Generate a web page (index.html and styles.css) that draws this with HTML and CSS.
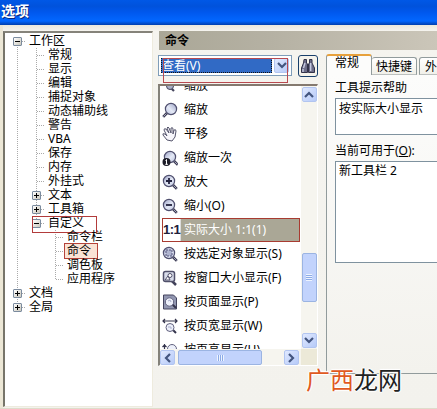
FILE: index.html
```
<!DOCTYPE html>
<html lang="zh-CN">
<head>
<meta charset="utf-8">
<title>选项</title>
<link rel="stylesheet" href="styles.css">
</head>
<body>
<svg width="0" height="0" class="defs">
  <defs>
    <linearGradient id="glass" x1="0" y1="0" x2="1" y2="1"><stop offset="0" stop-color="#9aa0c4"/><stop offset=".55" stop-color="#e4e9f6"/><stop offset="1" stop-color="#b9c0dc"/></linearGradient>
    <g id="lens"><path d="M11 11l3.800 3.800" stroke="#3c3c55" stroke-width="2.600"/><path d="M11.500 11.500l3 3" stroke="#a6a6bb" stroke-width="1"/><circle cx="7" cy="7" r="5.600" fill="url(#glass)" stroke="#50506f" stroke-width="1.200"/></g>
  </defs>
</svg>
<header class="titlebar">选项</header>
<main class="dialog">
  <nav class="tree">
    <ul class="roots">
      <li><div class="node"><i class="box minus"></i>工作区</div>
        <ul class="branch">
          <li class="node">常规</li><li class="node">显示</li><li class="node">编辑</li><li class="node">捕捉对象</li><li class="node">动态辅助线</li><li class="node">警告</li><li class="node">VBA</li><li class="node">保存</li><li class="node">内存</li><li class="node">外挂式</li>
          <li class="node"><i class="box"></i>文本</li>
          <li class="node"><i class="box"></i>工具箱</li>
          <li><div class="node marked"><i class="box minus"></i>自定义</div>
            <ul class="branch deep">
              <li class="node">命令栏</li><li class="node"><span class="chosen">命令</span></li><li class="node">调色板</li><li class="node">应用程序</li>
            </ul>
          </li>
        </ul>
      </li>
      <li class="node"><i class="box"></i>文档</li>
      <li class="node"><i class="box"></i>全局</li>
    </ul>
  </nav>
  <section class="content">
    <h1>命令</h1>
    <div class="columns">
      <div class="commands">
        <div class="picker">
          <div class="combo"><span class="value">查看(V)</span><span class="btn"><svg width="10" height="7" viewBox="0 0 10 7"><path d="M1 1l4 4 4-4"/></svg></span></div>
          <button class="find"><svg width="16" height="17" viewBox="0 0 16 17"><path d="M4 1.500h2.500V5l1 1v8.500h-6V10l2-5zM9.500 1.500H12V5l2.500 5v4.500h-6V6l1-1z" fill="#6d6d88" stroke="#33334a"/><path d="M7 6h2v4H7z" fill="#34344a"/><path d="M3.500 10L5 5M10.700 5v8M3 14v-3" stroke="#c7cae0" stroke-width="1.400"/></svg></button>
          <i class="outline"></i>
        </div>
        <div class="listbox">
          <ul class="items">
            <li><svg viewBox="0 0 16 16"><path d="M1 5.500h14" stroke="#46465e" stroke-width="2"/><path d="M9 10l3 3" stroke="#46465e" stroke-width="2.200"/><circle cx="8" cy="8" r="3.500" fill="#aaaec5" stroke="#46465e"/></svg>缩放</li>
            <li><svg viewBox="0 0 16 16"><g transform="matrix(-1 0 0 1 16 0)"><use href="#lens"/></g></svg>缩放</li>
            <li><svg viewBox="0 0 16 16"><path d="M5 14L1 9q-1-2 2-1l2 2-3-6q0-2 2-1l3 4-2-5q1-2 2 0l2 5V2q2-1 2 1v5l1-4q2-1 2 1l-1 6-3 4z" fill="#f7f6fb" stroke="#56566d"/></svg>平移</li>
            <li><svg viewBox="0 0 16 16"><g transform="translate(1 0)"><use href="#lens"/></g><circle cx="4.500" cy="12" r="4" fill="#1b1b27"/><path d="M3.500 10.500l1-1v5M3.300 14.300h2.600" stroke="#fff"/></svg>缩放一次</li>
            <li><svg viewBox="0 0 16 16"><use href="#lens"/><path d="M4 7h6M7 4v6" stroke="#22223e" stroke-width="1.800"/></svg>放大</li>
            <li><svg viewBox="0 0 16 16"><use href="#lens"/><path d="M4 7h6" stroke="#22223e" stroke-width="1.800"/></svg>缩小(O)</li>
            <li class="selected"><b>1:1</b><span>实际大小 1:1(1)</span></li>
            <li><svg viewBox="0 0 16 16"><use href="#lens"/><rect x="4" y="4" width="6" height="6" stroke="#55557a" stroke-dasharray="2 1" fill="#b0b5d0"/></svg>按选定对象显示(S)</li>
            <li><svg viewBox="0 0 16 16"><path d="M10 11l4 4" stroke="#414159" stroke-width="2.500"/><rect x="1.500" y="1.500" width="11" height="10" rx="2" fill="#d8dcea" stroke="#50506a" stroke-width="1.500"/><circle cx="8" cy="5.500" r="2" fill="#fff" stroke="#50506a"/><path d="M3 10l3-4 2 4z" fill="#fff" stroke="#50506a"/></svg>按窗口大小显示(F)</li>
            <li><svg viewBox="0 0 16 16"><path d="M1.500 1h10l3 3v11h-13z" fill="#9297b1" stroke="#44445e"/><path d="M10 10l4 4" stroke="#34344c" stroke-width="2"/><circle cx="7.500" cy="8" r="4.200" fill="#edf0fa" stroke="#62627f"/><path d="M6 7l2-1 1 2" stroke="#a9aecb"/></svg>按页面显示(P)</li>
            <li><svg viewBox="0 0 16 16"><path d="M1 3h14M3 1L1 3l2 2M13 1l2 2-2 2" stroke="#34344c" stroke-width="1.200"/><path d="M11 12l3 3" stroke="#34344c" stroke-width="2"/><circle cx="8" cy="9.500" r="4" fill="#edf0fa" stroke="#62627f"/><path d="M6 9h3v2" stroke="#a9aecb"/></svg>按页宽显示(W)</li>
            <li><svg viewBox="0 0 16 16"><path d="M2.500 2v12M.5 5l2-2 2 2" stroke="#34344c" stroke-width="1.200"/><circle cx="10" cy="7" r="4.500" fill="#edf0fa" stroke="#62627f"/></svg>按页高显示(H)</li>
          </ul>
          <div class="vbar"><span class="btn"><svg width="10" height="7" viewBox="0 0 10 7"><path d="M1 6l4-4 4 4"/></svg></span><span class="thumb"><i></i></span><span class="btn"><svg width="10" height="7" viewBox="0 0 10 7"><path d="M1 1l4 4 4-4"/></svg></span></div>
          <div class="hbar"><span class="btn"><svg width="7" height="10" viewBox="0 0 7 10"><path d="M6 1L2 5l4 4"/></svg></span><span class="thumb"><i></i></span><span class="btn"><svg width="7" height="10" viewBox="0 0 7 10"><path d="M1 1l4 4-4 4"/></svg></span></div>
          <div class="corner"></div>
        </div>
      </div>
      <div class="details">
        <div class="tabs"><span class="tab active">常规</span><span class="tab">快捷键</span><span class="tab">外观</span></div>
        <div class="panel">
          <p>工具提示帮助</p>
          <div class="field help">按实际大小显示</div>
          <p>当前可用于(<u>O</u>):</p>
          <div class="field bars">新工具栏 2</div>
        </div>
      </div>
    </div>
  </section>
  <div class="watermark"><span>广西</span>龙网</div>
</main>
</body>
</html>
```
FILE: styles.css
```
* { box-sizing: border-box; }
body { margin: 0; width: 437px; height: 409px; overflow: hidden; background: #f3f2ed; color: #000; font: 12px/14px "Noto Sans", "Noto Sans CJK SC", sans-serif; }
ul, h1, p { margin: 0; padding: 0; list-style: none; }
svg { display: block; fill: none; flex: none; }
.defs { position: absolute; }
.titlebar { height: 25px; padding: 3px 0 0 1px; color: #fff; font-size: 14px; font-weight: bold; line-height: 15px; text-shadow: 1px 1px #0a2a80; background: linear-gradient(#0058e6 0, #0052dc 25%, #0058ee 50%, #0267ff 84%, #0350cf 93%, #003fae); }
.dialog { position: relative; display: flex; height: 384px; padding: 6px 0 1px 3px; border-bottom: 1px solid #dfdccb; background: linear-gradient(90deg, #ece7d6 3px, transparent 3px), linear-gradient(#ece9dc 0, #f5f4ef 6px, #f3f2ed 100%); }

.tree { width: 150px; height: 376px; padding-top: 1px; background: #fff; border: 1px solid #eeebde; border-left: 2px solid #77756a; border-top: 2px solid #85837a; flex: none; }
.roots { background: repeating-linear-gradient(#aaa 0 1px, transparent 1px 2px) 12px 7px / 1px 266px no-repeat; }
.node { position: relative; display: flex; align-items: flex-start; height: 14px; line-height: 13px; white-space: nowrap; }
.node::before { content: ""; align-self: center; width: 8px; height: 1px; margin: 0 3px 0 13px; background: repeating-linear-gradient(90deg, #aaa 0 1px, transparent 1px 2px); }
.branch { margin-left: 19px; background: repeating-linear-gradient(#aaa 0 1px, transparent 1px 2px) 12px 0 / 1px 175px no-repeat; }
.deep { background-size: 1px 49px; }
.box { position: absolute; left: 8px; top: 3px; width: 9px; height: 9px; border: 1px solid #7b8b9e; border-radius: 1px; background: linear-gradient(#000, #000) center / 5px 1px no-repeat, linear-gradient(#000, #000) center / 1px 5px no-repeat, linear-gradient(135deg, #fff, #cbc8bc); }
.box.minus { background: linear-gradient(#000, #000) center / 5px 1px no-repeat, linear-gradient(135deg, #fff, #cbc8bc); }
.marked::after { content: ""; position: absolute; left: 8px; top: 0; width: 63px; height: 15px; border: 1px solid #b23b3b; }
.chosen { height: 16px; margin: -1px 0 0 -3px; padding: 0 6px 0 2px; line-height: 13px; border: 1px solid #b4423a; background: #fae3d5; }

.content { flex: 1; min-width: 0; padding-left: 5px; }
h1 { height: 19px; margin-left: 1px; padding: 2px 0 0 6px; font-size: 12px; line-height: 15px; font-weight: bold; background: linear-gradient(90deg, #aaa797, #b5b1a3 40%, #cbc6b9); }
.columns { display: flex; padding-top: 4px; }
.commands { width: 160px; flex: none; }
.picker { position: relative; display: flex; gap: 6px; padding-top: 1px; height: 30px; }
.combo { display: flex; width: 134px; height: 21px; padding: 2px; border: 1px solid #7f9db9; background: #fff; }
.value { flex: 1; height: 15px; margin-right: 2px; color: #fff; line-height: 13px; border: 1px dotted #e0ae61; outline: 1px dotted #111; outline-offset: -1px; background: #316ac5; }
.btn { display: flex; align-items: center; justify-content: center; width: 15px; height: 15px; flex: none; border: 1px solid #b2c5f0; border-radius: 2px; background: linear-gradient(135deg, #e0e9ff, #b6caf8); }
.btn path { stroke: #43557f; stroke-width: 2.200; }
.find { display: grid; place-items: center; width: 20px; height: 22px; padding: 0; border: 1px solid #193f6b; border-radius: 3px; background: #f5f3ec; }
.outline { position: absolute; left: 5px; top: 4px; width: 125px; height: 25px; border: 1px solid #b84a50; }
.listbox { display: grid; grid-template: 263px 16px / 141px 16px; width: 160px; height: 282px; border: 1px solid #fff; border-top: 2px solid #84796f; border-left: 2px solid #84827a; background: #fff; }
.items { overflow: hidden; }
.items li { display: flex; align-items: center; height: 24px; padding-left: 2px; white-space: nowrap; }
.items li:first-child { margin-top: -12px; }
.items svg { width: 16px; height: 16px; margin-right: 6px; }
.items .selected { width: 138px; margin-left: 2px; padding: 0; color: #fff; border: 1px solid #a83b31; background: #aaa796; }
.selected b { width: 18px; height: 22px; color: #20203a; background: #fff; border-right: 1px solid #ddd; font: bold 13px/22px "Liberation Sans", sans-serif; letter-spacing: -.5px; text-align: center; }
.selected span { margin-left: 3px; }
.vbar, .hbar { display: flex; background: #f6f5ef; }
.vbar { flex-direction: column; align-items: center; padding-top: 1px; }
.hbar { align-items: flex-end; }
.corner { background: #ece9d8; }
.thumb { display: grid; place-items: center; border: 1px solid #9bb4e2; border-radius: 2px; background: #c2d3fc; }
.vbar .thumb { width: 15px; height: 49px; margin: 151px 0 31px; }
.hbar .thumb { width: 84px; height: 15px; margin: 0 22px 0 3px; }
.vbar .thumb i { width: 6px; height: 7px; background: repeating-linear-gradient(#eef4ff 0 1px, #8cabe6 1px 2px); }
.hbar .thumb i { width: 7px; height: 6px; background: repeating-linear-gradient(90deg, #eef4ff 0 1px, #8cabe6 1px 2px); }

.details { width: 111px; margin-left: 8px; flex: none; overflow: hidden; }
.tabs { display: flex; align-items: flex-end; height: 21px; }
.tab { flex: none; width: 45px; height: 18px; margin-right: 2px; padding: 1px 0 0 5px; line-height: 15px; white-space: nowrap; border: 1px solid #919b9c; border-bottom-color: #bcc0bf; border-radius: 3px 3px 0 0; background: linear-gradient(#fff, #f1f0e9); }
.tab.active { width: 46px; height: 21px; margin: 0; padding: 0 0 0 8px; line-height: 14px; border-top: 2px solid #e7a13c; border-bottom: 0; background: #fcfcfb; }
.tab:nth-child(2) { padding-left: 4px; border-left: 0; }
.panel { width: 140px; height: 299px; padding: 4px 0 0 8px; border: 1px solid #919b9c; border-top: 0; background: linear-gradient(#fcfcfb, #f3f2ed); }
.panel p { height: 19px; line-height: 17px; white-space: nowrap; }
.field { width: 140px; border: 1px solid #7f929f; background: #fff; padding: 2px 0 0 3px; line-height: 15px; }
.help { height: 37px; margin-bottom: 7px; }
.bars { height: 102px; line-height: 13px; }
.watermark { position: absolute; left: 306px; top: 340px; color: #222; font: 24px/28px "Noto Sans CJK SC", sans-serif; text-shadow: 1px 0 #fff, -1px 0 #fff, 0 1px #fff, 0 -1px #fff, 0 0 3px #fff; }
.watermark span { color: #e0591f; }
```
